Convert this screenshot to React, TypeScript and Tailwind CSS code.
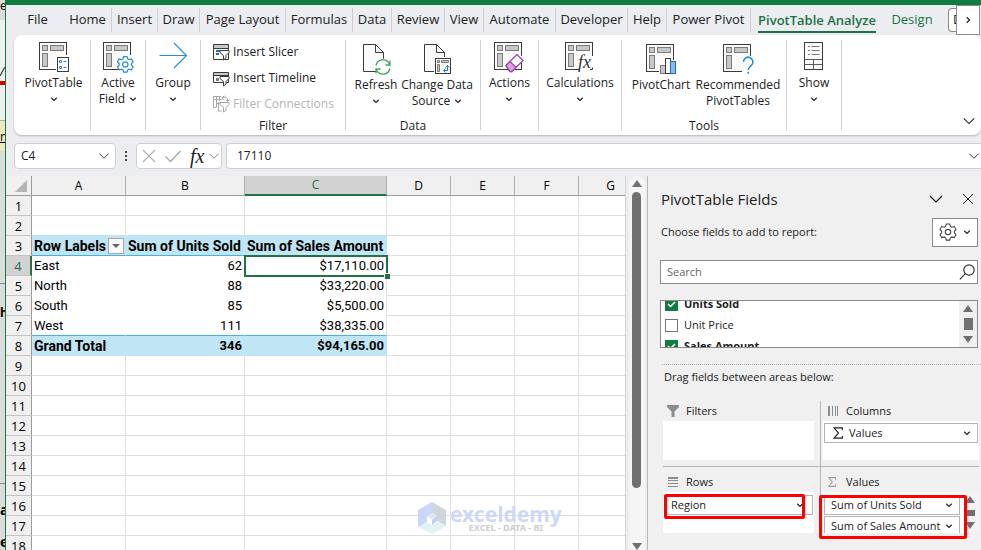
import { useState } from 'react'
import type { ReactNode } from 'react'

const TABS = [
  { label: 'File', cls: 'w-[53px]' },
  { label: 'Home', cls: 'w-12 border-r' },
  { label: 'Insert', cls: 'w-[46px] border-r' },
  { label: 'Draw', cls: 'w-[42px] border-r' },
  { label: 'Page Layout', cls: 'w-[86px] border-r' },
  { label: 'Formulas', cls: 'w-[67px] border-r' },
  { label: 'Data', cls: 'w-[39px] border-r' },
  { label: 'Review', cls: 'w-[53px] border-r' },
  { label: 'View', cls: 'w-[39px] border-r' },
  { label: 'Automate', cls: 'w-[72px] border-r' },
  { label: 'Developer', cls: 'w-[72px] border-r' },
  { label: 'Help', cls: 'w-[39px] border-r' },
  { label: 'Power Pivot', cls: 'w-[84px] border-r' },
]

const COLUMNS = [
  { name: 'A', cls: 'w-[94px]' },
  { name: 'B', cls: 'w-[119px]' },
  { name: 'C', cls: 'w-[142px]' },
  { name: 'D', cls: 'w-[64px]' },
  { name: 'E', cls: 'w-[64px]' },
  { name: 'F', cls: 'w-[64px]' },
  { name: 'G', cls: 'w-[64px]' },
  { name: 'H', cls: 'w-[64px]' },
  { name: 'I', cls: 'w-[64px]' },
  { name: 'J', cls: 'w-[64px]' },
]

const PIVOT: Record<number, string[]> = {
  3: ['Row Labels', 'Sum of Units Sold', 'Sum of Sales Amount'],
  4: ['East', '62', '$17,110.00'],
  5: ['North', '88', '$33,220.00'],
  6: ['South', '85', '$5,500.00'],
  7: ['West', '111', '$38,335.00'],
  8: ['Grand Total', '346', '$94,165.00'],
}

const ROWS = Array.from({ length: 40 }, (_, i) => i + 1)

function Chevron({ className = 'w-2 h-2' }: { className?: string }) {
  return (
    <svg viewBox="0 0 16 16" className={className} fill="none" stroke="currentColor" strokeWidth="2.4" aria-hidden="true">
      <path d="M2.5 5.5 8 11l5.5-5.5" />
    </svg>
  )
}

function ThinChevron({ className = 'w-4 h-4' }: { className?: string }) {
  return (
    <svg viewBox="0 0 16 16" className={className} fill="none" stroke="currentColor" strokeWidth="1.2" aria-hidden="true">
      <path d="m2 5 6 6 6-6" />
    </svg>
  )
}

function Grid({ children }: { children?: ReactNode }) {
  return (
    <svg viewBox="0 0 32 32" className="w-8 h-8 shrink-0" fill="none" aria-hidden="true">
      <rect x="1.5" y="1.5" width="27" height="27" fill="#fafafa" stroke="#3b3b3b" />
      <g fill="#c8c8c8" stroke="#7a7a7a">
        <rect x="4.5" y="4.5" width="5" height="5" />
        <rect x="12.5" y="4.5" width="13" height="5" />
        <rect x="4.5" y="12.5" width="5" height="13" />
      </g>
      {children}
    </svg>
  )
}

function Sheet({ children }: { children?: ReactNode }) {
  return (
    <svg viewBox="0 0 32 32" className="w-8 h-8 shrink-0" fill="none" aria-hidden="true">
      <path d="M3.5 1.5h12l8 8v19h-20z" fill="#fafafa" stroke="#3b3b3b" />
      <path d="M15.5 1.5v8h8" stroke="#3b3b3b" />
      {children}
    </svg>
  )
}

const PivotIcon = () => (
  <Grid>
    <path d="M18 14h13v17H18z" fill="#fff" />
    <rect x="19.5" y="16.5" width="11" height="14" fill="#fff" stroke="#3b3b3b" />
    <path d="M21.5 19.5h2v2h-2zM21.5 25.5h2v2h-2z" stroke="#1e86d0" />
    <path d="M25.5 20.5h3M25.5 26.5h3" stroke="#1e86d0" />
  </Grid>
)

const GEAR =
  'M20.6 15.2h3.8l.8 2.6 1.6.9 2.7-.7 1.9 3.3-1.9 1.9v1.8l1.9 2-1.9 3.2-2.7-.7-1.6.9-.8 2.6h-3.8l-.8-2.6-1.6-.9-2.7.7-1.9-3.2 1.9-2v-1.8l-1.9-1.9 1.9-3.3 2.7.7 1.6-.9z'

const ActiveFieldIcon = () => (
  <Grid>
    <path d="M17 14h15v18H17z" fill="#fff" />
    <g transform="translate(3.5 2.2) scale(.88)">
      <path d={GEAR} fill="#fff" stroke="#2b8fd6" strokeWidth="1.4" />
      <circle cx="22.5" cy="24.1" r="3" stroke="#2b8fd6" strokeWidth="1.4" />
    </g>
  </Grid>
)

const GroupIcon = () => (
  <svg viewBox="0 0 32 32" className="w-8 h-8 shrink-0" fill="none" stroke="#2b8fd6" strokeWidth="1.2" aria-hidden="true">
    <path d="M2.5 14.5h27M17 2l12.5 12.5L17 27" />
  </svg>
)

const RefreshIcon = () => (
  <Sheet>
    <circle cx="23" cy="24" r="8.5" fill="#fff" />
    <path
      d="M16 22.5A7.2 7.2 0 0 1 29.5 21M30 17.5V22h-4.5M30 25.5A7.2 7.2 0 0 1 16.5 27M16 30.5V26h4.5"
      stroke="#3ba55c"
      strokeWidth="1.3"
    />
  </Sheet>
)

const ChangeSourceIcon = () => (
  <Sheet>
    <path d="M13 14h18v18H13z" fill="#fff" />
    <rect x="14.5" y="15.5" width="15" height="15" fill="#fafafa" stroke="#3b3b3b" />
    <path d="M16.5 17.5h2v2h-2zM20.5 17.5h7v2h-7zM16.5 21.5h2v7h-2z" fill="#c8c8c8" stroke="#7a7a7a" />
    <path d="M22.5 27.5h4v-5M24.5 24.5l2-2 2 2M24.5 25.5l-2 2 2 2" stroke="#1e86d0" />
  </Sheet>
)

const ActionsIcon = () => (
  <Grid>
    <path d="m11 25 13-14 8 7-13 13z" fill="#fff" />
    <path d="m13 24.5 11-11 6 6-11 11h-2z" fill="#fff" stroke="#a347ae" strokeWidth="1.3" />
    <path d="m13 24.5 4-4 6 6-4 4h-2z" fill="#d9a5df" stroke="#a347ae" strokeWidth="1.3" />
  </Grid>
)

const CalcIcon = () => (
  <Grid>
    <path d="M15 12h17v17H15z" fill="#fff" />
    <path d="M28.5 12v3M12 28.5h3M26 28.5h2.5v-2" stroke="#3b3b3b" />
    <text x="14" y="27" fontSize="18" fontStyle="italic" fontFamily="Liberation Serif, serif" fill="#333">
      fx
    </text>
  </Grid>
)

const ChartIcon = () => (
  <Grid>
    <path d="M14 20h5v-6h8v3h5v15H14z" fill="#fff" />
    <rect x="15.5" y="22.5" width="5" height="8" fill="#c8c8c8" stroke="#7a7a7a" />
    <rect x="20.5" y="15.5" width="5" height="15" fill="#fff" stroke="#3b3b3b" />
    <rect x="25.5" y="18.5" width="5" height="12" fill="#83beec" stroke="#1e6fb8" />
  </Grid>
)

const RecommendIcon = () => (
  <Grid>
    <path d="M20 13h12v18H20z" fill="#fff" />
    <path
      d="M21.5 19a4.7 4.7 0 1 1 7.6 3.6c-2 1.5-2.9 2.3-2.9 4.4M26.2 28.8v2"
      stroke="#2b8fd6"
      strokeWidth="1.6"
    />
  </Grid>
)

const ShowIcon = () => (
  <svg viewBox="0 0 32 32" className="w-8 h-8 shrink-0" fill="none" aria-hidden="true">
    <rect x="6.5" y="1.5" width="18" height="27" fill="#fafafa" stroke="#3b3b3b" />
    <path d="M10 5.5h2M10 9.5h2M10 13.5h2M13.5 5.5h8M13.5 9.5h8M13.5 13.5h8" stroke="#7a7a7a" />
    <path d="M6.5 18.5h18M6.5 23.5h18M15.5 18.5v10" stroke="#5a5a5a" />
  </svg>
)

function FilterIcon({ kind }: { kind: 'slicer' | 'timeline' | 'links' }) {
  const links = kind === 'links'
  const ink = links ? '#a8a8a8' : '#3b3b3b'
  return (
    <svg viewBox="0 0 18 18" className="w-[18px] h-[18px] shrink-0" fill="none" aria-hidden="true">
      {!links && (
        <>
          <path d={kind === 'slicer' ? 'M.5 1.5h15v15H.5z' : 'M.5 3.5h15v10H.5z'} fill="#fff" stroke={ink} />
          <path d={kind === 'slicer' ? 'M1 2h14v3H1z' : 'M1 4h14v2H1z'} fill="#c8c8c8" />
          <path d={kind === 'slicer' ? 'M.5 5.5h15' : 'M.5 6.5h15'} stroke={ink} />
          {kind === 'slicer' ? (
            <path d="M3 8h7M3 11h3" stroke="#1e6fb8" strokeWidth="2" />
          ) : (
            <path d="M3 9h3v3H3z" fill="#7a7a7a" />
          )}
        </>
      )}
      {links && (
        <>
          <path d="M8 1.5H.5v11h3M.5 4.5h8M3.5 2v10M6.5 2v4M3.5 8.5h3" stroke={ink} />
          <path d="M5.5 16V7.5h3M5.5 16h3M9 4.5a3 3 0 0 1 5.5-1V6M12.5 4.5l2 2 2-2M11.5 1 9 2.5 10.5 5" stroke={ink} />
        </>
      )}
      <path d="M7 7.5h9v2l-3 3V15l-2.5 2v-4.5L7 9.5z" fill="#fff" stroke={ink} />
    </svg>
  )
}

type BigProps = { icon: ReactNode; lines: string[]; drop?: boolean; className?: string }

function BigButton({ icon, lines, drop = true, className = '' }: BigProps) {
  const inline = drop && lines.length > 1
  return (
    <button className={`flex flex-col items-center leading-4 whitespace-nowrap ${className}`}>
      {icon}
      <span className="mt-0.5">{lines[0]}</span>
      {lines.length > 1 && (
        <span className="flex items-center gap-1">
          {lines[1]}
          {inline && <Chevron />}
        </span>
      )}
      {drop && !inline && <Chevron className="w-2 h-2 mt-1" />}
    </button>
  )
}

function Group({ label, className, children }: { label?: string; className: string; children: ReactNode }) {
  return (
    <section className={`flex flex-col justify-between shrink-0 border-r border-[#d0d0d0] ${className}`}>
      <div className="flex justify-center">{children}</div>
      {label && <div className="text-center leading-2">{label}</div>}
    </section>
  )
}

function Ribbon() {
  return (
    <div className="ml-2 h-[100px] py-[5px] flex bg-white rounded-lg shadow-[0_1px_2px_#b5b5b8] shrink-0">
      <Group className="w-[77px] pt-px pl-[3px]">
        <BigButton icon={<PivotIcon />} lines={['PivotTable']} />
      </Group>
      <Group className="w-[55px] pt-px">
        <BigButton icon={<ActiveFieldIcon />} lines={['Active', 'Field']} />
      </Group>
      <Group className="w-[55px] pt-px">
        <BigButton icon={<GroupIcon />} lines={['Group']} />
      </Group>
      <Group label="Filter" className="w-[145px]">
        <div className="flex flex-col w-full pl-3 pt-[3px] gap-2">
          <button className="flex items-center gap-0.5 h-[18px] whitespace-nowrap">
            <FilterIcon kind="slicer" /> Insert Slicer
          </button>
          <button className="flex items-center gap-0.5 h-[18px] whitespace-nowrap">
            <FilterIcon kind="timeline" /> Insert Timeline
          </button>
          <button className="flex items-center gap-0.5 h-[18px] whitespace-nowrap text-[#b5b5b5]" disabled>
            <FilterIcon kind="links" /> Filter Connections
          </button>
        </div>
      </Group>
      <Group label="Data" className="w-[135px] pt-[3px]">
        <BigButton icon={<RefreshIcon />} lines={['Refresh']} className="w-12" />
        <BigButton icon={<ChangeSourceIcon />} lines={['Change Data', 'Source']} className="w-[74px]" />
      </Group>
      <Group className="w-[58px] pt-px">
        <BigButton icon={<ActionsIcon />} lines={['Actions']} />
      </Group>
      <Group className="w-[83px] pt-px">
        <BigButton icon={<CalcIcon />} lines={['Calculations']} />
      </Group>
      <Group label="Tools" className="w-[165px] pt-[3px]">
        <BigButton icon={<ChartIcon />} lines={['PivotChart']} drop={false} className="w-[68px]" />
        <BigButton icon={<RecommendIcon />} lines={['Recommended', 'PivotTables']} drop={false} className="w-[86px]" />
      </Group>
      <Group className="w-[55px] pt-px">
        <BigButton icon={<ShowIcon />} lines={['Show']} />
      </Group>
      <button className="ml-auto self-end mr-[5px] mb-0.5" aria-label="Collapse ribbon">
        <ThinChevron className="w-3.5 h-3.5" />
      </button>
    </div>
  )
}

function TabBar() {
  return (
    <nav className="flex h-[30px] pt-[3px] pl-[5px] text-[13px] overflow-hidden shrink-0">
      {TABS.map((tab) => (
        <button key={tab.label} className={`h-6 shrink-0 whitespace-nowrap border-[#cfcfd3] ${tab.cls}`}>
          {tab.label}
        </button>
      ))}
      <button className="w-[132px] h-6 shrink-0 flex justify-center font-semibold text-[#1a7343]">
        <span className="h-[25px] leading-6 border-b-2 border-[#1a7343] whitespace-nowrap">PivotTable Analyze</span>
      </button>
      <button className="w-[58px] h-6 shrink-0 text-[#1a7343]">Design</button>
      <div className="ml-auto flex">
        <button className="w-2 h-6 pl-1 overflow-hidden bg-white border border-r-0 border-[#8a8a8a] rounded-l">D</button>
        <button
          className="w-6 h-[30px] -mt-[3px] mr-px bg-white border border-[#8a8a8a] flex items-center justify-center"
          aria-label="Scroll tabs"
        >
          <Chevron className="w-2 h-2 -rotate-90" />
        </button>
      </div>
    </nav>
  )
}

function FormulaBar() {
  return (
    <div className="flex items-center h-[41px] pt-2 pb-[7px] pl-2 shrink-0">
      <div className="flex items-center w-[102px] h-[26px] pl-1.5 pr-[5px] bg-white border border-[#d0d0d0] rounded">
        <input aria-label="Name box" defaultValue="C4" className="w-full min-w-0 outline-none" />
        <ThinChevron className="w-3 h-3 shrink-0" />
      </div>
      <div className="w-5 flex flex-col items-center gap-0.5">
        <i className="w-0.5 h-0.5 bg-[#444]" />
        <i className="w-0.5 h-0.5 bg-[#444]" />
        <i className="w-0.5 h-0.5 bg-[#444]" />
      </div>
      <div className="flex items-center w-[86px] h-[26px] px-[5px] gap-2 bg-white border border-[#d0d0d0] rounded shrink-0">
        <button aria-label="Cancel">
          <svg viewBox="0 0 14 14" className="w-3.5 h-3.5" stroke="#b0b0b0" strokeWidth="1.2" aria-hidden="true">
            <path d="m1 1 12 12M13 1 1 13" />
          </svg>
        </button>
        <button aria-label="Enter">
          <svg viewBox="0 0 18 14" className="w-[18px] h-3.5" fill="none" stroke="#a8a8a8" strokeWidth="1.3" aria-hidden="true">
            <path d="m1.5 7.5 5 5L16.5 2" />
          </svg>
        </button>
        <button
          className="flex items-center gap-1 font-['Liberation_Serif',serif] italic text-xl leading-5"
          aria-label="Insert function"
        >
          fx
          <ThinChevron className="w-3 h-3 text-[#777]" />
        </button>
      </div>
      <div className="flex items-center grow h-[26px] ml-1 pl-[10px] pr-px bg-white border border-r-0 border-[#d0d0d0] rounded-l">
        <input aria-label="Formula" defaultValue="17110" className="grow outline-none" />
        <ThinChevron className="w-3 h-3 shrink-0" />
      </div>
    </div>
  )
}

function cellClass(row: number, col: number) {
  const pivot = col < 3 && row >= 3 && row <= 8
  if (!pivot) {
    if (row === 2 && col < 3) return 'border-r-[#e0e0e0] border-b-[#c0e6f5]'
    return 'border-[#e0e0e0]'
  }
  const head = row === 3 || row === 8
  const align = col > 0 && row !== 3 ? 'text-right' : 'text-left'
  const size = row === 3 || (row === 8 && col === 0) ? 'text-sm/4' : ''
  const fill = head ? 'font-bold bg-[#c0e6f5] border-r-[#c0e6f5]' : col === 2 ? 'border-r-[#e0e0e0]' : 'border-r-white'
  const line = row === 3 || row === 7 ? 'border-b-[#44b3e1]' : row === 8 ? 'border-b-[#c0e6f5]' : 'border-b-white'
  return `${align} ${size} ${fill} ${line}`
}

function Worksheet() {
  return (
    <div className="relative grow min-w-0 overflow-hidden bg-white border-r border-[#d4d4d8]">
      <table className="table-fixed w-max border-separate border-spacing-0 text-[13px] leading-4 text-black font-[Roboto,sans-serif]">
        <colgroup>
          <col className="w-[26px]" />
          {COLUMNS.map((c) => (
            <col key={c.name} className={c.cls} />
          ))}
        </colgroup>
        <thead>
          <tr className="h-5">
            <th className="p-0 bg-[#f0f0f0] border-r border-b border-[#9b9b9b]" aria-label="Select all">
              <svg viewBox="0 0 12 12" className="w-3 h-3 ml-auto mr-1" aria-hidden="true">
                <path d="M12 0v12H0z" fill="#b4b4b4" />
              </svg>
            </th>
            {COLUMNS.map((c) => (
              <th
                key={c.name}
                className={`p-0 font-normal font-['Open_Sans',sans-serif] text-[12px] border-r ${
                  c.name === 'C'
                    ? 'bg-[#d2d2d2] text-[#217346] border-b-2 border-b-[#217346] border-r-[#b0b0b0]'
                    : 'bg-[#f0f0f0] border-b border-b-[#9b9b9b] border-r-[#b0b0b0]'
                }`}
              >
                {c.name}
              </th>
            ))}
          </tr>
        </thead>
        <tbody>
          {ROWS.map((row) => (
            <tr key={row} className="h-5">
              <th
                className={`p-0 font-normal font-['Open_Sans',sans-serif] border-b border-b-[#c4c4c4] ${
                  row === 4 ? 'bg-[#d2d2d2] text-[#217346] border-r-2 border-r-[#217346]' : 'bg-[#f0f0f0] border-r border-r-[#9b9b9b]'
                }`}
              >
                {row}
              </th>
              {COLUMNS.map((c, col) => (
                <td key={c.name} className={`relative px-0.5 pt-px pb-0 border-r border-b whitespace-nowrap ${cellClass(row, col)}`}>
                  {row === 3 && col === 0 ? (
                    <span className="flex justify-between items-center">
                      Row Labels
                      <button
                        className="flex items-center justify-center w-4 h-4 -mr-px bg-[#fafafa] border border-[#a8a8a8]"
                        aria-label="Filter rows"
                      >
                        <svg viewBox="0 0 8 4" className="w-2 h-1" aria-hidden="true">
                          <path d="M0 0h8L4 4z" fill="#666" />
                        </svg>
                      </button>
                    </span>
                  ) : (
                    col < 3 && PIVOT[row]?.[col]
                  )}
                  {row === 4 && col === 2 && (
                    <span className="absolute z-10 -left-px -top-px -right-0.5 -bottom-0.5 border-2 border-[#217346]">
                      <i className="absolute -right-1 -bottom-1 w-1.5 h-1.5 bg-[#217346] border-l border-t border-white" />
                    </span>
                  )}
                </td>
              ))}
            </tr>
          ))}
        </tbody>
      </table>

      {/* Watermark */}
      <div className="absolute left-[412px] top-[326px] flex items-center gap-1 opacity-90">
        <svg viewBox="0 0 28 32" className="w-7 h-8" aria-hidden="true">
          <path d="M0 8 14 0v11l-5 3v7L0 25z" fill="#c5d3fa" />
          <path d="M14 0l14 8v16l-9-5v-5l-5-3z" fill="#ccd3d9" />
          <path d="M0 25l9-5 5 3 5-3 9 4-14 8z" fill="#e3f1f5" />
          <path d="m9 14 5-3 5 3-5 4z" fill="#dde5ec" />
          <path d="M14 18l5-4v5l-5 4z" fill="#b9cbf7" />
        </svg>
        <div className="flex flex-col items-center font-['Noto_Sans',sans-serif] font-bold">
          <span className="text-[21px] leading-5 text-[#c9d5f9]">exceldemy</span>
          <span className="text-[9px] leading-2 text-[#c5c9ce]">EXCEL - DATA - BI</span>
        </div>
      </div>
    </div>
  )
}

function Triangle({ down = false }: { down?: boolean }) {
  return (
    <svg viewBox="0 0 10 8" className="w-2.5 h-2 shrink-0" aria-hidden="true">
      <path d={down ? 'M0 1h10L5 8z' : 'M0 7h10L5 0z'} fill="#707070" />
    </svg>
  )
}

function FieldRow({ label, checked }: { label: string; checked: boolean }) {
  const [on, setOn] = useState(checked)
  return (
    <label className={`flex items-center gap-1.5 h-[21px] shrink-0 ${on ? 'font-bold' : ''}`}>
      <span className="grid">
        <input
          type="checkbox"
          checked={on}
          onChange={(e) => setOn(e.target.checked)}
          className="[grid-area:1/1] appearance-none w-[13px] h-[13px] bg-white border border-[#767676] checked:bg-[#107c41] checked:border-[#107c41]"
        />
        {on && (
          <svg
            viewBox="0 0 13 13"
            className="[grid-area:1/1] w-[13px] h-[13px] pointer-events-none"
            fill="none"
            stroke="#fff"
            strokeWidth="1.5"
            aria-hidden="true"
          >
            <path d="M3 6l2.5 2.5L10 4" />
          </svg>
        )}
      </span>
      {label}
    </label>
  )
}

function AreaItem({ children, className = '' }: { children: ReactNode; className?: string }) {
  return (
    <button
      className={`flex items-center justify-between w-full h-5 px-1.5 shrink-0 bg-white border border-[#b4b4b4] whitespace-nowrap ${className}`}
    >
      {children}
      <Chevron className="w-2 h-2 shrink-0" />
    </button>
  )
}

function Sigma({ className }: { className: string }) {
  return (
    <svg viewBox="0 0 10 12" className={className} fill="none" stroke="currentColor" strokeWidth="1.2" aria-hidden="true">
      <path d="M9.3 3V.8H1L5.5 6 1 11.2h8.3V9" />
    </svg>
  )
}

function AreaTitle({ icon, label }: { icon: ReactNode; label: string }) {
  return (
    <h3 className="flex items-center h-5 pl-1 gap-[7px]">
      <span className="w-3 text-[#8c8c8c]">{icon}</span>
      {label}
    </h3>
  )
}

function FieldsPane() {
  return (
    <aside className="w-[334px] shrink-0 flex flex-col pl-3 text-[11px] bg-[#f0f0f0] border-l border-[#b9b9bd] overflow-hidden">
      <div className="flex items-center h-[46px] pl-px shrink-0">
        <h2 className="text-[15px] leading-5">PivotTable Fields</h2>
        <button className="ml-auto" aria-label="Pane options">
          <ThinChevron />
        </button>
        <button className="ml-[18px] mr-[7px]" aria-label="Close pane">
          <svg viewBox="0 0 12 12" className="w-3 h-3" stroke="currentColor" aria-hidden="true">
            <path d="m1 1 10 10M11 1 1 11" />
          </svg>
        </button>
      </div>
      <div className="flex items-center justify-between h-5 pl-px pr-[3px] mb-[18px] shrink-0">
        <span>Choose fields to add to report:</span>
        <button
          className="flex items-center justify-center gap-1.5 w-[46px] h-[29px] bg-white border border-[#8a8a8a]"
          aria-label="Tools"
        >
          <svg viewBox="13 14 19 20" className="w-[18px] h-[18px]" fill="none" stroke="#444" strokeWidth="1.2" aria-hidden="true">
            <path d={GEAR} />
            <circle cx="22.5" cy="24.1" r="3" />
          </svg>
          <Chevron className="w-2 h-2" />
        </button>
      </div>
      <div className="flex items-center h-6 mr-[3px] px-1.5 shrink-0 bg-white border border-[#8a8a8a]">
        <input placeholder="Search" aria-label="Search fields" className="grow outline-none placeholder:text-[#666]" />
        <svg viewBox="0 0 16 16" className="w-4 h-4 -mr-1" fill="none" stroke="#333" strokeWidth="1.2" aria-hidden="true">
          <circle cx="10" cy="6" r="5.2" />
          <path d="M6.3 9.7.8 15.3" />
        </svg>
      </div>
      <div className="flex h-12 mt-4 mr-[3px] shrink-0 bg-white border border-[#8a8a8a] overflow-hidden">
        <div className="grow flex flex-col justify-center pt-0.5 pl-1 overflow-hidden">
          <FieldRow label="Units Sold" checked />
          <FieldRow label="Unit Price" checked={false} />
          <FieldRow label="Sales Amount" checked />
        </div>
        <div className="flex flex-col items-center justify-between w-[18px] py-1 bg-[#f0f0f0]">
          <Triangle />
          <i className="w-[9px] h-3 bg-[#707070]" />
          <Triangle down />
        </div>
      </div>
      <div className="mt-4 ml-0.5 border-t border-dotted border-[#b4b4b4]" />
      <p className="pl-1 mt-1 leading-4">Drag fields between areas below:</p>

      <div className="grid grid-cols-[158px_minmax(0,1fr)] mt-4 ml-[3px] mr-0.5">
        <div className="h-[66px] pr-1.5 border-r border-b border-[#b4b4b4]">
          <AreaTitle
            label="Filters"
            icon={
              <svg viewBox="0 0 12 12" className="w-3 h-3" fill="currentColor" aria-hidden="true">
                <path d="M0 0h12v2L7.5 6.5V12h-3V6.5L0 2z" />
              </svg>
            }
          />
          <div className="h-[39px] bg-white" />
        </div>
        <div className="h-[66px] pl-0.5 border-b border-[#b4b4b4]">
          <AreaTitle
            label="Columns"
            icon={
              <svg viewBox="0 0 12 12" className="w-3 h-3" stroke="currentColor" aria-hidden="true">
                <path d="M1.5 1v10M2.5 1v10M5.5 1v10M8.5 1v10M10.5 1v10" />
              </svg>
            }
          />
          <div className="h-[39px] pt-0.5 px-px bg-white">
            <AreaItem>
              <span className="flex items-center gap-1.5 pl-0.5">
                <Sigma className="w-2.5 h-3" /> Values
              </span>
            </AreaItem>
          </div>
        </div>
        <div className="h-[66px] pt-[5px] pr-1.5 border-r border-[#b4b4b4]">
          <AreaTitle
            label="Rows"
            icon={
              <svg viewBox="0 0 12 12" className="w-3 h-3" stroke="currentColor" aria-hidden="true">
                <path d="M1 1.5h10M1 2.5h10M1 4.5h10M1 7.5h10M1 10.5h10" />
              </svg>
            }
          />
          <div className="relative h-[41px] pt-[3px] px-px bg-white">
            <AreaItem className="pr-2">Region</AreaItem>
            <span className="absolute left-px right-[9px] top-0.5 h-[25px] border-3 border-[#fe0000] rounded-[2px] pointer-events-none" />
          </div>
        </div>
        <div className="relative h-[66px] pt-[5px] pl-0.5">
          <AreaTitle label="Values" icon={<Sigma className="w-2.5 h-2.5" />} />
          <div className="flex h-[41px]">
            <div className="flex flex-col gap-px grow min-w-0 pt-[3px] pl-px pr-1 bg-white overflow-hidden">
              <AreaItem>Sum of Units Sold</AreaItem>
              <AreaItem>Sum of Sales Amount</AreaItem>
            </div>
            <div className="flex flex-col items-end justify-between w-[15px] pr-1 py-1 bg-[#f3f3f3]">
              <Triangle />
              <i className="w-[9px] h-1.5 bg-[#707070]" />
              <Triangle down />
            </div>
          </div>
          <span className="absolute -left-0.5 right-3 top-7 h-11 border-3 border-[#fe0000] rounded-[2px] pointer-events-none" />
        </div>
      </div>
    </aside>
  )
}

// Sliver of the window that sits behind the workbook
function BackWindow() {
  return (
    <div className="w-[5px] shrink-0 overflow-hidden bg-[#dcdcdc] text-black" aria-hidden="true">
      <div className="h-5 leading-3">e</div>
      <div className="h-[61px] flex items-end bg-[#f0f0f0] italic">/</div>
      <div className="h-1 bg-[#d40000]" />
      <div className="h-9 bg-[#eee] border-b border-[#aaa]" />
      <div className="h-[30px] bg-[#efe8c0] leading-8 underline">n</div>
      <div className="h-[133px] border-b border-[#8a8a8a]" />
      <div className="h-[200px] pt-5 border-b border-[#8a8a8a] font-bold">h</div>
      <div className="pt-4 h-12 font-bold text-sm">a</div>
      <div className="font-bold text-sm leading-5">e</div>
    </div>
  )
}

export default function App() {
  return (
    <div className="flex h-screen overflow-hidden bg-[#ebedf1] text-[12px] text-[#222] font-['Open_Sans','Noto_Sans',sans-serif]">
      <BackWindow />
      <div className="flex flex-col grow min-w-0 border-l border-[#107c41]">
        <div className="h-[5px] bg-[#107c41] shrink-0" />
        <TabBar />
        <Ribbon />
        <FormulaBar />
        <main className="flex grow min-h-0">
          <Worksheet />
          <div className="flex flex-col items-center justify-between w-[21px] shrink-0">
            <div className="flex flex-col items-center w-4 h-full pt-1 gap-1 bg-[#f5f5f5] rounded-t-lg">
              <Triangle />
              <i className="w-[9px] h-[80%] bg-[#707070] rounded-full" />
              <span className="mt-auto">
                <Triangle down />
              </span>
            </div>
          </div>
          <FieldsPane />
        </main>
      </div>
    </div>
  )
}
